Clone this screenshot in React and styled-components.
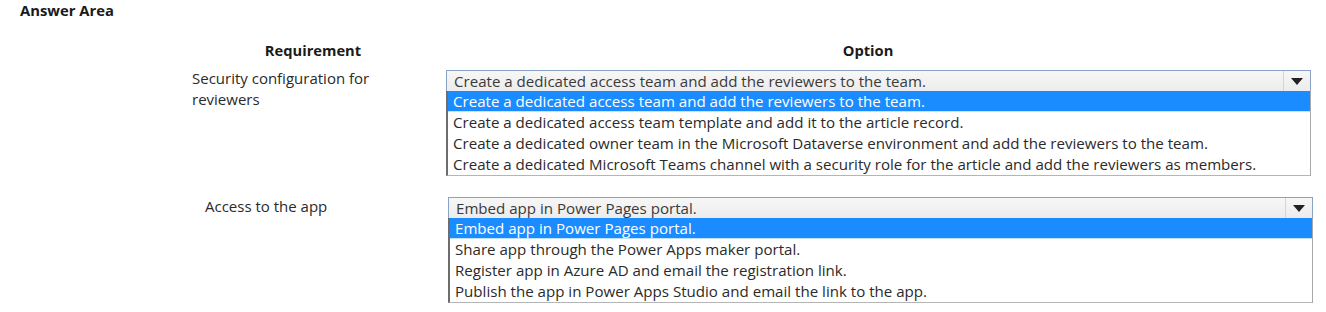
import React from "react";
import styled, { createGlobalStyle } from "styled-components";

const Global = createGlobalStyle`
  html, body { margin: 0; padding: 0; background: #ffffff; }
  body { font-family: "Open Sans", "Liberation Sans", sans-serif; color: #222222; }
`;

const Page = styled.div`
  width: 1326px;
  height: 312px;
  overflow: hidden;
  box-sizing: border-box;
  padding: 1px 0 0 20px;
`;

const Title = styled.div`
  font-size: 14.8px;
  font-weight: 700;
  line-height: 18px;
  color: #1a1a1a;
`;

const Table = styled.div`
  display: grid;
  grid-template-columns: 266px 866px;
  margin: 21px 0 0 160px;
`;

const Head = styled.div`
  font-size: 14.7px;
  font-weight: 700;
  line-height: 20px;
  text-align: center;
  color: #1a1a1a;
  padding-right: ${(p) => p.$pr || 0}px;
`;

const Label = styled.div`
  font-size: 15px;
  line-height: 21px;
  color: #2a2a2a;
  padding: ${(p) => p.$pt}px 0 0 ${(p) => p.$pl}px;
  width: ${(p) => p.$w}px;
`;

const Cell = styled.div`
  padding: ${(p) => p.$pt}px 0 0 ${(p) => p.$pl}px;
`;

const SelectBox = styled.div`
  display: flex;
  height: 21px;
  box-sizing: border-box;
  width: ${(p) => p.$w}px;
  border: 1px solid #8aa3c4;
  border-bottom: none;
  background: linear-gradient(#f7f7f7, #ececec);
`;

const SelectValue = styled.div`
  flex: 1;
  font-size: 15.1px;
  line-height: 19px;
  padding: 1px 0 0 ${(p) => p.$pl}px;
  color: #3a3a3a;
  white-space: nowrap;
`;

const Arrow = styled.div`
  width: 26px;
  border-left: 1px solid #d4d4d4;
  display: flex;
  align-items: center;
  justify-content: center;
`;

const List = styled.div`
  width: ${(p) => p.$w}px;
  box-sizing: border-box;
  border-left: 2px solid #6d6d6d;
  border-right: 1px solid #a8a8a8;
  border-bottom: 1px solid #b5b5b5;
  background: #ffffff;
`;

const Item = styled.div`
  height: ${(p) => (p.$active ? 20 : 21)}px;
  line-height: ${(p) => (p.$active ? 20 : 21)}px;
  font-size: 15.1px;
  padding-left: ${(p) => p.$pl}px;
  white-space: nowrap;
  color: ${(p) => (p.$active ? "#ffffff" : "#2a2a2a")};
  background: ${(p) => (p.$active ? "#1a8cff" : "transparent")};
  border-bottom: ${(p) => (p.$active ? "1px solid #bfe3ff" : "none")};
`;

const Dropdown = ({ value, options, w, pl }) => (
  <>
    <SelectBox $w={w}>
      <SelectValue $pl={pl + 2}>{value}</SelectValue>
      <Arrow>
        <svg width="12" height="7" viewBox="0 0 12 7">
          <path d="M0 0 H12 L6 7 Z" fill="#222" />
        </svg>
      </Arrow>
    </SelectBox>
    <List $w={w}>
      {options.map((o, i) => (
        <Item key={o} $active={i === 0} $pl={pl}>
          {o}
        </Item>
      ))}
    </List>
  </>
);

const q1 = [
  "Create a dedicated access team and add the reviewers to the team.",
  "Create a dedicated access team template and add it to the article record.",
  "Create a dedicated owner team in the Microsoft Dataverse environment and add the reviewers to the team.",
  "Create a dedicated Microsoft Teams channel with a security role for the article and add the reviewers as members.",
];

const q2 = [
  "Embed app in Power Pages portal.",
  "Share app through the Power Apps maker portal.",
  "Register app in Azure AD and email the registration link.",
  "Publish the app in Power Apps Studio and email the link to the app.",
];

export default function App() {
  return (
    <Page>
      <Global />
      <Title>Answer Area</Title>
      <Table>
        <Head>Requirement</Head>
        <Head $pr={22}>Option</Head>
        <Label $pt={8} $pl={12} $w={190}>
          Security configuration for reviewers
        </Label>
        <Cell $pt={10} $pl={0}>
          <Dropdown value={q1[0]} options={q1} w={865} pl={5} />
        </Cell>
        <Label $pt={20} $pl={25} $w={200}>
          Access to the app
        </Label>
        <Cell $pt={21} $pl={2}>
          <Dropdown value={q2[0]} options={q2} w={865} pl={5} />
        </Cell>
      </Table>
    </Page>
  );
}
